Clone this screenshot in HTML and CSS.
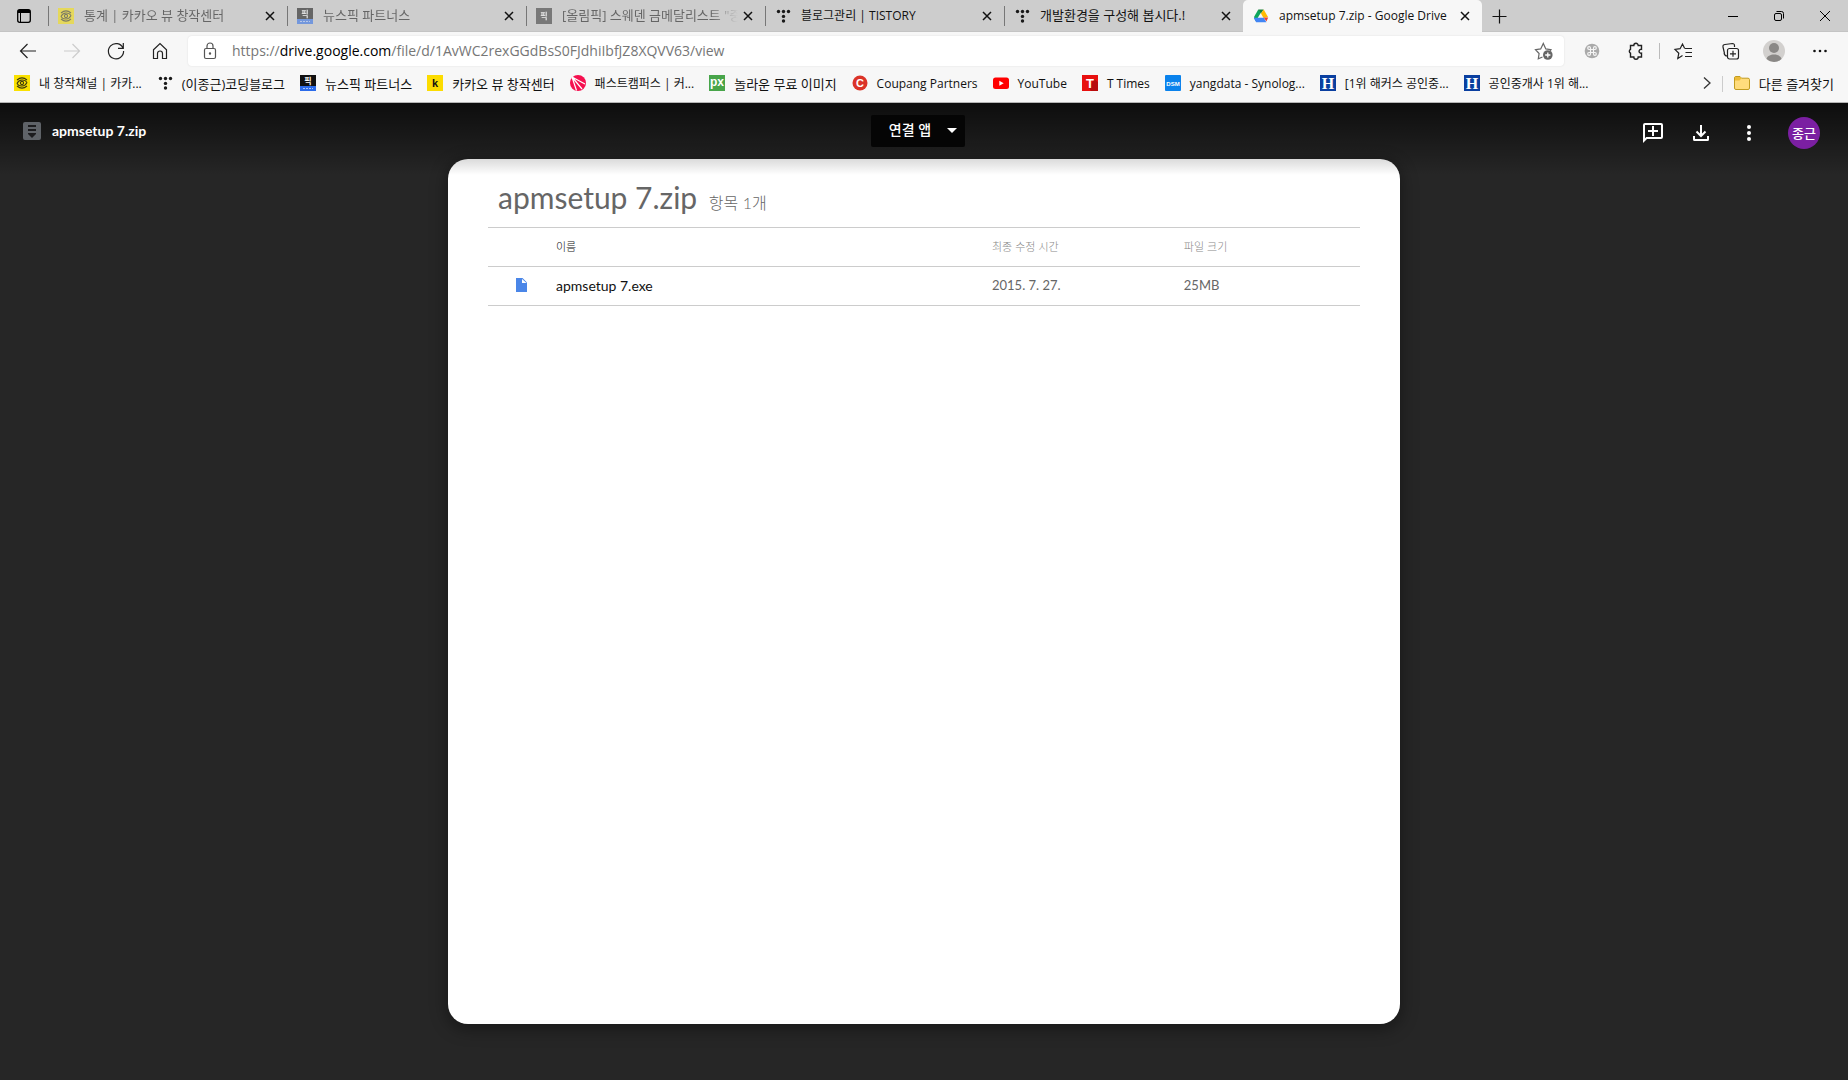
FILE: index.html
```html
<!DOCTYPE html>
<html lang="ko">
<head>
    <meta charset="UTF-8">
    <meta name="viewport" content="width=device-width, initial-scale=1.0">
    <title>apmsetup 7.zip - Google Drive</title>
    <link rel="stylesheet" href="styles.css">
</head>
<body>
    <!-- shared icons -->
    <svg class="defs" aria-hidden="true">
        <symbol id="i-close" viewBox="0 0 10 10"><path d="M1 1l8 8M9 1L1 9" stroke="currentColor" stroke-width="1.5" fill="none"/></symbol>
        <symbol id="i-tistory" viewBox="0 0 16 16"><g fill="#1a1a1a"><circle cx="3.5" cy="3.5" r="1.7"/><circle cx="8.5" cy="3.5" r="1.7"/><circle cx="13.5" cy="3.5" r="1.7"/><circle cx="8.5" cy="8.4" r="1.7"/><circle cx="8.5" cy="13" r="1.7"/></g></symbol>
        <symbol id="i-view" viewBox="0 0 16 16"><path fill="#fae100" d="M0 0h16v16H0z"/><g fill="none" stroke="#3c3a10" stroke-width="1.1"><circle cx="8" cy="8" r="1.600"/><path d="M3 5Q8 .8 13 5M3 11q5 4.200 10 0M3 8.500C5 4 11 4 13 7.500M3 8.500C5 12 11 12 13 7.500"/></g></symbol>
    </svg>

    <div class="browser">
        <div class="tab-strip">
            <button class="tab-actions" aria-label="탭 작업 메뉴">
                <svg width="16" height="16" viewBox="0 0 16 16"><rect x="1.700" y="1.700" width="12.600" height="12.600" rx="2" fill="none" stroke="#000" stroke-width="1.300"/><path d="M2 2h12v3H2z"/><path d="M4.500 5v9" stroke="#000"/></svg>
            </button>
            <div class="tab faded">
                <svg class="favicon"><use href="#i-view"/></svg>
                <span class="tab-title ko">통계 | 카카오 뷰 창작센터</span>
                <button class="tab-close" aria-label="탭 닫기"><svg><use href="#i-close"/></svg></button>
            </div>
            <div class="tab faded">
                <svg class="favicon" viewBox="0 0 16 16"><path fill="#111" d="M0 0h16v11H0z"/><path fill="#2b6bea" d="M0 11h16v5H0z"/><path stroke="#a9c5fb" d="M3 13.500h10" stroke-dasharray="2 1"/><text x="8" y="9" class="fav-ko" fill="#fff">픽</text></svg>
                <span class="tab-title ko">뉴스픽 파트너스</span>
                <button class="tab-close" aria-label="탭 닫기"><svg><use href="#i-close"/></svg></button>
            </div>
            <div class="tab faded">
                <svg class="favicon" viewBox="0 0 16 16"><path fill="#333" d="M0 0h16v16H0z"/><text x="8" y="11" class="fav-ko" fill="#fff">픽</text></svg>
                <span class="tab-title ko cut">[올림픽] 스웨덴 금메달리스트 "중</span>
                <button class="tab-close" aria-label="탭 닫기"><svg><use href="#i-close"/></svg></button>
            </div>
            <div class="tab">
                <svg class="favicon"><use href="#i-tistory"/></svg>
                <span class="tab-title">블로그관리 | TISTORY</span>
                <button class="tab-close" aria-label="탭 닫기"><svg><use href="#i-close"/></svg></button>
            </div>
            <div class="tab">
                <svg class="favicon"><use href="#i-tistory"/></svg>
                <span class="tab-title ko">개발환경을 구성해 봅시다.!</span>
                <button class="tab-close" aria-label="탭 닫기"><svg><use href="#i-close"/></svg></button>
            </div>
            <div class="tab active">
                <svg class="favicon" viewBox="0 0 16 16"><path fill="#0da65c" d="M5.300 1.500L1 9l1.600 4.300L8 4.500z"/><path fill="#188038" d="M5.300 1.500h5.400L8 5.600z"/><path fill="#ffba00" d="M10.700 1.500L15 9l-4.600.8L8 5.600z"/><path fill="#ea4335" d="M10.600 9.500H15.200l-1.800 4z"/><path fill="#4285f4" d="M1 9.800h9.800l2.600 4.400H3.200L1 10.500z"/></svg>
                <span class="tab-title">apmsetup 7.zip - Google Drive</span>
                <button class="tab-close" aria-label="탭 닫기"><svg><use href="#i-close"/></svg></button>
            </div>
            <button class="new-tab" aria-label="새 탭"><svg width="16" height="16" viewBox="0 0 16 16"><path d="M8.500 1.500v14M1.500 8.500h14" stroke="#111" stroke-width="1.200"/></svg></button>
            <div class="window-buttons">
                <button aria-label="최소화"><svg width="12" height="12" viewBox="0 0 12 12"><path d="M1 6.500h10" stroke="#000"/></svg></button>
                <button aria-label="복원"><svg width="12" height="12" viewBox="0 0 12 12" fill="none" stroke="#000"><rect x="1.500" y="3.500" width="7" height="7" rx="1.500"/><path d="M3.500 1.500h5a2 2 0 0 1 2 2v5"/></svg></button>
                <button aria-label="닫기"><svg width="12" height="12" viewBox="0 0 12 12"><path d="M1 1l10 10M11 1L1 11" stroke="#000"/></svg></button>
            </div>
        </div>

        <div class="toolbar">
            <div class="nav-buttons">
                <button aria-label="뒤로"><svg width="20" height="20" viewBox="0 0 20 20"><path d="M18 10H2.500M9.500 3L2.500 10l7 7"/></svg></button>
                <button aria-label="앞으로" disabled><svg width="20" height="20" viewBox="0 0 20 20"><path d="M2 10h15.500M10.500 3l7 7-7 7"/></svg></button>
                <button aria-label="새로 고침"><svg width="20" height="20" viewBox="0 0 20 20"><path d="M17 7.200A7.600 7.600 0 1 0 17.600 10M17.300 2v5.300H12"/></svg></button>
                <button aria-label="홈"><svg width="20" height="20" viewBox="0 0 20 20"><path d="M3.500 8.800L10 2.500l6.500 6.300v8.700h-4v-5a2.500 2.500 0 0 0-5 0v5h-4z"/></svg></button>
            </div>
            <div class="address">
                <svg class="lock" width="20" height="20" viewBox="0 0 20 20"><rect x="4.500" y="7.500" width="11" height="10" rx="1.500"/><path d="M7 7.500V5a3 3 0 0 1 6 0v2.500"/><circle cx="10" cy="12.500" r=".6" fill="#555"/></svg>
                <a class="url" href="#">https://<span>drive.google.com</span>/file/d/1AvWC2rexGGdBsS0FJdhiIbfJZ8XQVV63/view</a>
                <button aria-label="즐겨찾기에 추가"><svg width="20" height="20" viewBox="0 0 20 20"><path stroke="#666" d="M8.500 16l-4.200 1.800.8-5.300-3.600-3.800 5.200-.8L9.300 2.500l2.500 5.400 5.200.8-.9 1.300"/><circle cx="13.800" cy="14" r="4.800" fill="#666" stroke="none"/><path stroke="#fff" stroke-width="1.300" d="M13.800 11.400v5.200M11.200 14h5.200"/></svg></button>
            </div>
            <div class="tools">
                <button aria-label="확장 프로그램"><svg width="16" height="16" viewBox="0 0 16 16"><circle cx="8" cy="8" r="7.300" fill="#aaa" stroke="none"/><path stroke="#f5f5f5" d="M6.500 6.500h3v3h-3zM6.500 6.500H5A1.400 1.400 0 1 1 6.500 5zM9.500 6.500V5A1.400 1.400 0 1 1 11 6.500zM9.500 9.500H11A1.400 1.400 0 1 1 9.500 11zM6.500 9.500V11A1.400 1.400 0 1 1 5 9.500z"/></svg></button>
                <button aria-label="확장"><svg width="18" height="18" viewBox="0 0 18 18"><path stroke-width="1.400" d="M3.500 3.500h3.300a2.200 2.200 0 0 1 4.400 0h3.300v3.800a2 2 0 1 0 0 3.900v3.800h-3.300a2.200 2.200 0 0 1-4.400 0H3.500v-3.800a2.200 2.200 0 0 1 0-3.900z"/></svg></button>
                <button class="ruled" aria-label="즐겨찾기"><svg width="20" height="20" viewBox="0 0 20 20"><path d="M9.500 14.500l-4.700 3 1-5.300L2 8.500l5.100-.8L9.500 3l2.200 4.500M12 7.500h7M12.500 11.500H19M12 15.500h7"/></svg></button>
                <button aria-label="컬렉션"><svg width="20" height="20" viewBox="0 0 20 20"><path d="M14.500 6V4.500a2 2 0 0 0-2-2L5 3.500a2 2 0 0 0-2 2.500l1.500 6.500M7 15c-1.500 0-2.500-1-3-3"/><rect x="7.500" y="7.500" width="11" height="10.500" rx="2"/><path d="M13 9.800v6M10 12.800h6"/></svg></button>
                <button aria-label="프로필"><svg width="22" height="22" viewBox="0 0 22 22"><circle cx="11" cy="11" r="11" fill="#d2d0ce" stroke="none"/><circle cx="11" cy="8" r="5" fill="#8a8886" stroke="none"/><path d="M3.500 19c1-6 14-6 15 0a11 11 0 0 1-15 0z" fill="#8a8886" stroke="none"/></svg></button>
                <button class="more" aria-label="설정 및 기타"><svg width="16" height="16" viewBox="0 0 16 16"><g fill="#111" stroke="none"><circle cx="2.500" cy="8" r="1.300"/><circle cx="8" cy="8" r="1.300"/><circle cx="13.500" cy="8" r="1.300"/></g></svg></button>
            </div>
        </div>

        <nav class="bookmarks">
            <a href="#"><svg class="favicon"><use href="#i-view"/></svg>내 창작채널 | 카카...</a>
            <a href="#" class="ko"><svg class="favicon"><use href="#i-tistory"/></svg>(이종근)코딩블로그</a>
            <a href="#" class="ko"><svg class="favicon" viewBox="0 0 16 16"><path fill="#111" d="M0 0h16v11H0z"/><path fill="#2b6bea" d="M0 11h16v5H0z"/><path stroke="#a9c5fb" d="M3 13.500h10" stroke-dasharray="2 1"/><text x="8" y="9" class="fav-ko" fill="#fff">픽</text></svg>뉴스픽 파트너스</a>
            <a href="#" class="ko"><svg class="favicon" viewBox="0 0 16 16"><path fill="#fcdc00" d="M0 0h16v16H0z"/><text x="8" y="12" class="fav-sans" fill="#111">k</text></svg>카카오 뷰 창작센터</a>
            <a href="#"><svg class="favicon" viewBox="0 0 16 16"><circle cx="8" cy="8" r="8" fill="#f5104f"/><path d="M2 2l4.500 13.500M2 2l10 12M2 2l13 7" stroke="#fff" stroke-width="1.200"/></svg>패스트캠퍼스 | 커...</a>
            <a href="#" class="ko"><svg class="favicon" viewBox="0 0 16 16"><path fill="#48a54a" d="M0 0h16v16H0z"/><text x="8" y="11" class="fav-sans thin" fill="#fff">px</text></svg>놀라운 무료 이미지</a>
            <a href="#"><svg class="favicon" viewBox="0 0 16 16"><circle cx="8" cy="8" r="7.500" fill="#db3328"/><text x="8" y="12" class="fav-sans" fill="#fff">C</text></svg>Coupang Partners</a>
            <a href="#"><svg class="favicon" viewBox="0 0 16 16"><rect y="2.500" width="16" height="11.500" rx="2.500" fill="#f00"/><path d="M6.300 5.800v5l4.400-2.500z" fill="#fff"/></svg>YouTube</a>
            <a href="#"><svg class="favicon" viewBox="0 0 16 16"><path fill="#e8100f" d="M0 0h16v16H0z"/><path fill="#b80d0d" d="M12 4l4 3v9H9l-2-3z"/><text x="8" y="13" class="fav-sans large" fill="#fff">T</text></svg>T Times</a>
            <a href="#"><svg class="favicon" viewBox="0 0 16 16"><rect width="16" height="16" rx="1" fill="#0a82ec"/><text x="8" y="11" class="fav-sans small" fill="#fff">DSM</text></svg>yangdata - Synolog...</a>
            <a href="#"><svg class="favicon" viewBox="0 0 16 16"><path fill="#0a3fa0" d="M0 0h16v16H0z"/><text x="8" y="14" class="fav-serif" fill="#fff">H</text></svg>[1위 해커스 공인중...</a>
            <a href="#"><svg class="favicon" viewBox="0 0 16 16"><path fill="#0a3fa0" d="M0 0h16v16H0z"/><text x="8" y="14" class="fav-serif" fill="#fff">H</text></svg>공인중개사 1위 해...</a>
            <div class="other">
                <button aria-label="더 보기"><svg width="10" height="14" viewBox="0 0 10 14"><path d="M2 1.500L8 7l-6 5.500" fill="none" stroke="#333" stroke-width="1.300"/></svg></button>
                <a href="#" class="ko"><svg class="favicon" viewBox="0 0 16 16"><path d="M.5 3A1.500 1.500 0 0 1 2 1.500h4l1.500 1.700H14A1.500 1.500 0 0 1 15.500 4.700V13a1.500 1.500 0 0 1-1.500 1.500H2A1.500 1.500 0 0 1 .5 13z" fill="#ffdc7c" stroke="#c19c20"/><path d="M1 5.500h4.500L7.500 3.300 6 2H1z" fill="#edbb38"/></svg>다른 즐겨찾기</a>
            </div>
        </nav>
    </div>

    <main class="viewer">
        <header class="viewer-bar">
            <div class="file-name">
                <svg width="18" height="18" viewBox="0 0 18 18"><rect width="18" height="18" rx="2" fill="#5f6368"/><path d="M5 3h8v2H5zM5 7h8v2H5zM5 11h8v1l-4 4-4-4z" fill="#1c1c1e"/></svg>
                <span>apmsetup 7.zip</span>
            </div>
            <button class="open-with">연결 앱 <svg width="10" height="5" viewBox="0 0 10 5"><path d="M0 0h10L5 5z" fill="#fff"/></svg></button>
            <div class="actions">
                <button aria-label="댓글 추가"><svg width="24" height="24" viewBox="0 0 24 24"><path fill="#fff" d="M20 2H4a2 2 0 0 0-2 2v18l4-4h14a2 2 0 0 0 2-2V4a2 2 0 0 0-2-2zm0 14H5.200L4 17.200V4h16zM11 15h2v-4h4V9h-4V5h-2v4H7v2h4z"/></svg></button>
                <button aria-label="다운로드"><svg width="24" height="24" viewBox="0 0 24 24"><path fill="none" stroke="#fff" stroke-width="2" d="M12 4v11M7.500 10.500L12 15l4.500-4.500M5 15v3.500q0 .5.500.5h13q.5 0 .5-.5V15"/></svg></button>
                <button aria-label="추가 작업"><svg width="24" height="24" viewBox="0 0 24 24" fill="#fff"><circle cx="12" cy="6" r="2"/><circle cx="12" cy="12" r="2"/><circle cx="12" cy="18" r="2"/></svg></button>
                <button class="account">종근</button>
            </div>
        </header>

        <section class="archive">
            <h1>apmsetup 7.zip <small>항목 1개</small></h1>
            <table>
                <thead>
                    <tr>
                        <th class="col-icon"></th>
                        <th class="col-name">이름</th>
                        <th class="col-date">최종 수정 시간</th>
                        <th>파일 크기</th>
                    </tr>
                </thead>
                <tbody>
                    <tr>
                        <td class="col-icon"><svg width="11" height="14" viewBox="0 0 11 14"><path d="M0 0h6.500L11 4.500V14H0z" fill="#4a86e8"/><path d="M6 1v4h4.500z" fill="#fff"/></svg></td>
                        <td class="col-name">apmsetup 7.exe</td>
                        <td class="col-date">2015. 7. 27.</td>
                        <td>25MB</td>
                    </tr>
                </tbody>
            </table>
        </section>
    </main>
</body>
</html>
```
FILE: styles.css
```css
* {
    box-sizing: border-box;
}
body {
    margin: 0;
    min-height: 100vh;
    display: flex;
    flex-direction: column;
    font-family: "Open Sans", "Noto Sans CJK KR", sans-serif;
    font-size: 12px;
    color: #111;
    background: #262626;
}
button {
    display: flex;
    align-items: center;
    justify-content: center;
    padding: 0;
    border: 0;
    background: none;
    font: inherit;
    color: inherit;
}
a {
    color: inherit;
    text-decoration: none;
}
svg {
    display: block;
    flex: none;
}
.defs {
    position: absolute;
    width: 0;
    height: 0;
}
.favicon {
    width: 16px;
    height: 16px;
}

/* letters inside the favicons */
.fav-ko {
    font: bold 8px "Noto Sans CJK KR", sans-serif;
    text-anchor: middle;
}
.fav-serif {
    font: bold 16px "Liberation Serif", serif;
    text-anchor: middle;
}
.fav-sans {
    font: bold 11px "Liberation Sans", sans-serif;
    text-anchor: middle;
}
.fav-sans.thin {
    font-size: 12px;
}
.fav-sans.large {
    font-size: 13px;
}
.fav-sans.small {
    font-size: 6px;
}

/* tabs */
.browser {
    background: #f7f7f7;
    border-bottom: 1px solid #b5b5b5;
}
.tab-strip {
    display: flex;
    height: 32px;
    background: #cdcdcd;
    border-bottom: 1px solid #c4c4c4;
}
.tab-actions {
    width: 48px;
    flex: none;
}
.tab {
    display: flex;
    align-items: center;
    flex: 0 1 239px;
    min-width: 0;
    padding: 0 11px 0 10px;
    background: linear-gradient(#777, #777) 0 6px / 1px 20px no-repeat;
}
.tab-title {
    flex: 1;
    margin: 0 4px 2px 10px;
    overflow: hidden;
    white-space: nowrap;
}
.tab-title.ko {
    font-size: 13px;
}
.tab-title.cut {
    mask-image: linear-gradient(to right, #000 85%, transparent);
}
.tab.faded .favicon,
.tab.faded .tab-title {
    opacity: .55;
}
.tab-close {
    width: 12px;
    height: 12px;
}
.tab-close svg {
    width: 10px;
    height: 10px;
}
.tab.active {
    height: 32px;
    background: #f7f7f7;
    border-radius: 5px 5px 0 0;
}
.new-tab {
    width: 34px;
}
.window-buttons {
    display: flex;
    margin-left: auto;
}
.window-buttons button {
    width: 46px;
}

/* address bar */
.toolbar {
    display: flex;
    align-items: center;
    padding: 4px 4px 0 6px;
}
.toolbar svg {
    fill: none;
    stroke: #222;
    stroke-width: 1.2;
}
.nav-buttons,
.tools {
    display: flex;
}
.nav-buttons button,
.tools button {
    width: 44px;
    height: 30px;
}
.nav-buttons button:disabled svg {
    stroke: #ccc;
}
.address {
    display: flex;
    align-items: center;
    flex: 1;
    height: 30px;
    margin: 0 6px;
    padding: 0 10px 0 12px;
    background: #fff;
    border-radius: 4px;
    box-shadow: 0 0 2px #ddd;
}
.address .lock {
    stroke: #555;
}
.url {
    flex: 1;
    margin-left: 12px;
    font-size: 14px;
    line-height: 18px;
    color: #767676;
}
.url span {
    color: #000;
}
.tools .ruled {
    width: 50px;
    background: linear-gradient(#bbb, #bbb) 1px 7px / 1px 16px no-repeat;
}
.tools .more {
    width: 48px;
}

/* bookmarks */
.bookmarks {
    display: flex;
    gap: 15px;
    height: 36px;
    padding: 0 14px 2px;
    white-space: nowrap;
}
.bookmarks a {
    display: flex;
    align-items: center;
    gap: 9px;
}
.bookmarks .ko {
    font-size: 13px;
}
.other {
    display: flex;
    gap: 10px;
    margin-left: auto;
}
.other a {
    padding-left: 12px;
    background: linear-gradient(#ccc, #ccc) 0 10px / 1px 16px no-repeat;
}

/* drive viewer */
.viewer {
    position: relative;
    flex: 1;
    display: flex;
    justify-content: center;
    padding: 56px;
}
.viewer-bar {
    position: absolute;
    top: 0;
    left: 0;
    right: 0;
    display: grid;
    grid-template-columns: 1fr auto 1fr;
    align-items: start;
    height: 72px;
    padding: 12px 28px 0 23px;
    color: #fff;
    background: linear-gradient(rgba(0, 0, 0, .65), rgba(0, 0, 0, 0));
}
.file-name {
    display: flex;
    align-items: center;
    gap: 11px;
    height: 32px;
    font: bold 14px Lato, sans-serif;
}
.file-name span {
    padding-bottom: 2px;
}
.open-with {
    gap: 16px;
    height: 32px;
    margin-right: 7px;
    padding: 0 8px 2px 18px;
    border-radius: 2px;
    background: #050505;
    font-size: 14px;
    font-weight: 500;
    line-height: 20px;
}
.actions {
    display: flex;
    align-items: center;
    justify-content: flex-end;
    gap: 24px;
    margin-top: 2px;
}
.account {
    width: 32px;
    height: 32px;
    margin-left: 3px;
    padding-bottom: 2px;
    border-radius: 50%;
    background: #7b1fa2;
    font-size: 13px;
    font-weight: 500;
}
.archive {
    width: 100%;
    max-width: 952px;
    padding: 20px 40px;
    background: #fff;
    border-radius: 20px;
    box-shadow: 0 4px 16px 2px rgba(0, 0, 0, .35);
    font-family: Lato, "Noto Sans CJK KR", sans-serif;
}
.archive h1 {
    height: 49px;
    margin: 0;
    padding-left: 10px;
    border-bottom: 1px solid #ccc;
    font-size: 30px;
    font-weight: normal;
    line-height: 36px;
    color: #666;
}
.archive small {
    margin-left: 4px;
    font-size: 16px;
    font-weight: 300;
}
.archive table {
    width: 100%;
    table-layout: fixed;
    border-collapse: separate;
    border-spacing: 0;
}
.archive th,
.archive td {
    height: 39px;
    padding: 0 0 2px;
    border-bottom: 1px solid #ccc;
    font-size: 13px;
    text-align: left;
    color: #666;
}
.archive th {
    font-size: 11px;
    font-weight: 300;
    color: #888;
}
.archive .col-icon {
    width: 68px;
}
.archive .col-icon svg {
    margin-left: 28px;
}
.archive .col-name {
    width: 50%;
    color: #111;
}
.archive td.col-name {
    font-size: 14px;
}
.archive .col-date {
    width: 22%;
}
```
